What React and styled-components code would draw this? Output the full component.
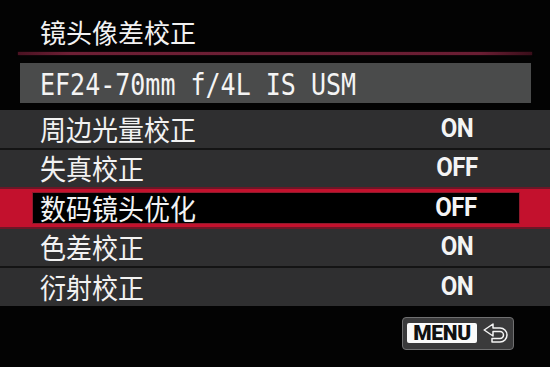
import React from 'react';
import styled, { createGlobalStyle } from 'styled-components';

const Global = createGlobalStyle`
  html, body { margin: 0; padding: 0; background: #000; }
  * { box-sizing: border-box; }
`;

const Screen = styled.div`
  width: 550px;
  height: 367px;
  background: #030303;
  display: flex;
  flex-direction: column;
  overflow: hidden;
  font-family: "Noto Sans CJK SC", "Noto Sans", sans-serif;
  color: #f2f2f2;
`;

const Header = styled.div`
  height: 52px;
  padding: 12px 0 0 40px;
  display: flex;
  align-items: center;
`;

const Title = styled.div`
  font-size: 26px;
  line-height: 1;
  display: inline-block;
  transform: scaleY(1.02);
`;

const Divider = styled.div`
  height: 3px;
  margin: 0 18px;
  background: linear-gradient(90deg, #4a1222 0%, #6e1f35 10%, #6a1d33 90%, #3a0e1a 100%);
  box-shadow: 0 0 2px #3a0c18;
`;

const LensBox = styled.div`
  height: 40px;
  margin: 8px 19px 0 20px;
  padding-left: 20px;
  background: #4a4b4b;
  display: flex;
  align-items: center;
`;

const LensName = styled.span`
  display: inline-block;
  font-family: "DejaVu Sans Mono", "Liberation Mono", monospace;
  font-size: 25px;
  line-height: 1;
  color: #f4f4f4;
  transform: scaleY(1.2);
  transform-origin: left center;
  margin-top: 2px;
`;

const List = styled.div`
  margin-top: 7px;
  display: flex;
  flex-direction: column;
  gap: 2px;
  background: #141414;
`;

const Row = styled.div`
  height: ${p => (p.$selected ? '41.5px' : '37.5px')};
  margin: ${p => (p.$selected ? '-2px 0' : '0')};
  display: flex;
  background: ${p => (p.$selected ? '#c3112d' : '#2f2f30')};
  padding: ${p => (p.$selected ? '3px 30px 3px 32px' : '0')};
  border-top: ${p => (p.$selected ? '2px solid #6c1727' : 'none')};
  border-bottom: ${p => (p.$selected ? '2px solid #6c1727' : 'none')};
`;

const Cell = styled.div`
  flex: 1;
  display: flex;
  align-items: center;
  padding-left: ${p => (p.$selected ? '7px' : '40px')};
  padding-right: ${p => (p.$selected ? '13px' : '43px')};
  background: ${p => (p.$selected ? '#000' : 'transparent')};
  border: ${p => (p.$selected ? '1px solid #8e1a2c' : 'none')};
`;

const Label = styled.span`
  flex: 1;
  font-size: 26px;
  line-height: 1;
  display: inline-block;
  transform: scaleY(1.1);
  transform-origin: left center;
`;

const Value = styled.span`
  width: 100px;
  text-align: center;
  font-family: Roboto, "Liberation Sans", sans-serif;
  font-weight: 700;
  font-size: 24px;
  line-height: 1;
  letter-spacing: -0.5px;
  color: #f4f4f4;
  transform: scaleY(1.05);
`;

const Footer = styled.div`
  margin-top: 11px;
  display: flex;
  justify-content: flex-end;
  padding-right: 36px;
`;

const MenuButton = styled.div`
  width: 112px;
  height: 33px;
  border-radius: 4px;
  background: #3a3a3b;
  border: 1px solid #707071;
  display: flex;
  align-items: center;
  padding-left: 4px;
  gap: 6px;
`;

const MenuTag = styled.span`
  width: 70px;
  height: 20px;
  background: #fafafa;
  border-radius: 2px;
  color: #111;
  font-family: Roboto, "Liberation Sans", sans-serif;
  font-weight: 900;
  font-size: 21px;
  line-height: 20px;
  text-align: center;
  letter-spacing: -0.3px;
`;

const ReturnIcon = () => (
  <svg width="26" height="21" viewBox="0 0 26 21">
    <path
      d="M1.2 7 L10 1 L10 5 L17 5 A7 7 0 0 1 17 19 L9 19 L9 15.5 L17 15.5 A3.5 3.5 0 0 0 17 8.5 L10 8.5 L10 13 Z"
      fill="none"
      stroke="#f4f4f4"
      strokeWidth="1.5"
      strokeLinejoin="round"
    />
  </svg>
);

const items = [
  { label: '周边光量校正', value: 'ON' },
  { label: '失真校正', value: 'OFF' },
  { label: '数码镜头优化', value: 'OFF', selected: true },
  { label: '色差校正', value: 'ON' },
  { label: '衍射校正', value: 'ON' },
];

export default function App() {
  return (
    <Screen>
      <Global />
      <Header>
        <Title>镜头像差校正</Title>
      </Header>
      <Divider />
      <LensBox>
        <LensName>EF24-70mm f/4L IS USM</LensName>
      </LensBox>
      <List>
        {items.map(it => (
          <Row key={it.label} $selected={it.selected}>
            <Cell $selected={it.selected}>
              <Label>{it.label}</Label>
              <Value>{it.value}</Value>
            </Cell>
          </Row>
        ))}
      </List>
      <Footer>
        <MenuButton>
          <MenuTag>MENU</MenuTag>
          <ReturnIcon />
        </MenuButton>
      </Footer>
    </Screen>
  );
}
